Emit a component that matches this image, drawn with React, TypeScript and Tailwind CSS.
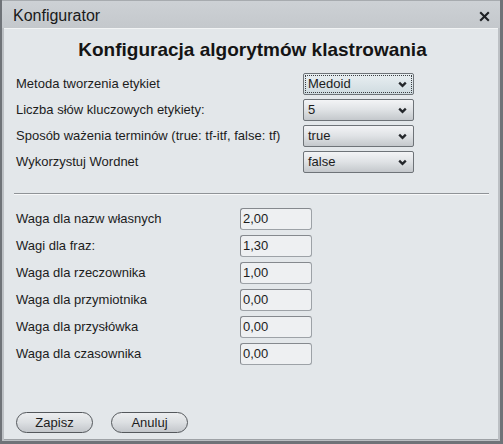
import React from "react";

const font = { fontFamily: '"Liberation Sans", Arial, sans-serif' };

function Chevron() {
  return (
    <svg width="9" height="7" viewBox="0 0 9 7" className="shrink-0">
      <path d="M1.2 1.6 L4.5 4.9 L7.8 1.6" fill="none" stroke="#24272b" strokeWidth="2.3" />
    </svg>
  );
}

function Select({ value, focused }: { value: string; focused?: boolean }) {
  return (
    <div
      className={
        "w-[111px] h-[22px] rounded-[2px] border border-[#6e7378] p-[1px] " +
        (focused
          ? "bg-gradient-to-b from-[#e9eff2] to-[#cfdbe0]"
          : "bg-gradient-to-b from-[#f3f4f6] via-[#dfe2e5] to-[#c4c8cc]")
      }
    >
      <div
        className={
          "h-full flex items-center pl-[2px] pr-[4px] text-[13px] text-[#1c1c1c] " +
          (focused ? "border border-dotted border-[#3a3d41]" : "border border-transparent")
        }
      >
        <span className="flex-1">{value}</span>
        <Chevron />
      </div>
    </div>
  );
}

function Field({ value }: { value: string }) {
  return (
    <div className="w-[72px] h-[22px] rounded-[3px] border border-[#9da2a7] border-t-[#85898e] border-l-[#85898e] bg-[#eef0f2] flex items-center pl-[2px] text-[13px] text-[#1c1c1c]">
      {value}
    </div>
  );
}

function PillButton({ label }: { label: string }) {
  return (
    <div className="w-[77px] h-[21px] rounded-full border border-[#54585c] bg-gradient-to-b from-[#eceef0] via-[#dcdfe2] to-[#c3c7cb] flex items-center justify-center text-[13px] text-[#1c1c1c]">
      {label}
    </div>
  );
}

export default function App() {
  const selects = [
    { label: "Metoda tworzenia etykiet", value: "Medoid", focused: true },
    { label: "Liczba słów kluczowych etykiety:", value: "5" },
    { label: "Sposób ważenia terminów (true: tf-itf, false: tf)", value: "true" },
    { label: "Wykorzystuj Wordnet", value: "false" },
  ];
  const fields = [
    { label: "Waga dla nazw własnych", value: "2,00" },
    { label: "Wagi dla fraz:", value: "1,30" },
    { label: "Waga dla rzeczownika", value: "1,00" },
    { label: "Waga dla przymiotnika", value: "0,00" },
    { label: "Waga dla przysłówka", value: "0,00" },
    { label: "Waga dla czasownika", value: "0,00" },
  ];
  return (
    <div
      style={font}
      className="w-[503px] h-[444px] bg-[#6f7378] flex flex-col overflow-hidden text-[#1c1c1c]"
    >
      <div className="flex-1 flex flex-col ml-[2px] mr-[3px] mb-[3px] bg-[#bcc0c4]">
        {/* title bar */}
        <div className="h-[28px] shrink-0 flex items-center justify-between pl-[11px] pr-[10px] pt-[3px] bg-gradient-to-b from-[#cdd1d5] to-[#c4c8cc] border-t border-[#a7abaf]">
          <span className="text-[16px] leading-none text-[#1a1a1a]">Konfigurator</span>
          <svg width="11" height="11" viewBox="0 0 11 11">
            <path d="M1.2 1.2 L9.8 9.8 M9.8 1.2 L1.2 9.8" stroke="#1e2124" strokeWidth="2.1" />
          </svg>
        </div>
        {/* content */}
        <div className="flex-1 flex flex-col ml-[2px] mr-[2px] mb-[1px] bg-[#e3e7ea] border-t border-[#f2f4f5] border-b border-b-[#9ea2a6] pl-[12px] pr-[9px]">
          <h1 className="text-[19px] font-bold text-center leading-none mt-[11px] mb-[14px] text-[#141414]">
            Konfiguracja algorytmów klastrowania
          </h1>
          <div className="flex flex-col gap-[4px]">
            {selects.map((s) => (
              <div key={s.label} className="flex items-center h-[22px]">
                <span className="w-[287px] text-[13px]">{s.label}</span>
                <Select value={s.value} focused={s.focused} />
              </div>
            ))}
          </div>
          <div className="mt-[20px] mr-[0px] ml-[-2px] h-[2px] border-t border-[#8f9397] border-b border-b-[#f7f8f9]" />
          <div className="flex flex-col gap-[5px] mt-[13px]">
            {fields.map((f) => (
              <div key={f.label} className="flex items-center h-[22px]">
                <span className="w-[224px] text-[13px]">{f.label}</span>
                <Field value={f.value} />
              </div>
            ))}
          </div>
          <div className="flex-1" />
          <div className="flex gap-[18px] mb-[6px]">
            <PillButton label="Zapisz" />
            <PillButton label="Anuluj" />
          </div>
        </div>
      </div>
    </div>
  );
}
